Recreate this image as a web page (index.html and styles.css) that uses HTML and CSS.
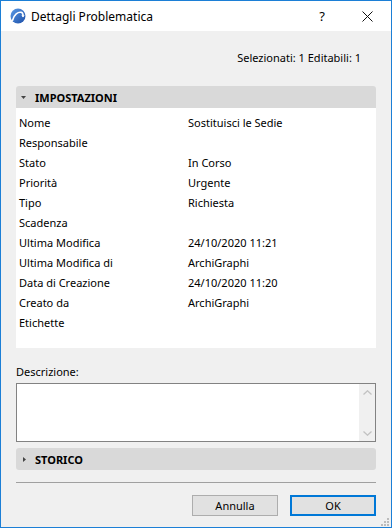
FILE: index.html
```html
<!DOCTYPE html>
<html lang="it">
<head>
<meta charset="utf-8">
<title>Dettagli Problematica</title>
<link rel="stylesheet" href="styles.css">
</head>
<body>
<div class="window">
  <div class="titlebar">
    <svg class="logo" width="16" height="16" viewBox="0 0 16 16">
      <defs>
        <linearGradient id="lg" x1="0" y1="0" x2="1" y2="1">
          <stop offset="0" stop-color="#5a9ae6"/>
          <stop offset="1" stop-color="#1d4fa8"/>
        </linearGradient>
      </defs>
      <circle cx="8" cy="8" r="7.5" fill="url(#lg)"/>
      <path d="M2.6 12.2 C4 6.5 8 3.6 11.2 4.3 C12.6 4.7 13.2 6.2 13 8.4" fill="none" stroke="#fff" stroke-width="1.6" stroke-linecap="round"/>
      <path d="M13 8.4 L12 7.2 M13 8.4 L14 7.3" fill="none" stroke="#fff" stroke-width="1" stroke-linecap="round"/>
    </svg>
    <span class="title">Dettagli Problematica</span>
    <span class="help">?</span>
    <svg class="close" width="11" height="11" viewBox="0 0 11 11">
      <path d="M0.5 0.5 L10.5 10.5 M10.5 0.5 L0.5 10.5" stroke="#111" stroke-width="1"/>
    </svg>
  </div>
  <div class="content">
    <div class="counts">Selezionati: 1 Editabili: 1</div>

    <div class="section-head open">
      <svg class="tri" width="5" height="3" viewBox="0 0 5 3"><path d="M0 0 H5 L2.5 3 Z" fill="#444"/></svg>
      <span>IMPOSTAZIONI</span>
    </div>
    <div class="props">
      <div class="row"><span class="k">Nome</span><span class="v">Sostituisci le Sedie</span></div>
      <div class="row"><span class="k">Responsabile</span><span class="v"></span></div>
      <div class="row"><span class="k">Stato</span><span class="v">In Corso</span></div>
      <div class="row"><span class="k">Priorità</span><span class="v">Urgente</span></div>
      <div class="row"><span class="k">Tipo</span><span class="v">Richiesta</span></div>
      <div class="row"><span class="k">Scadenza</span><span class="v"></span></div>
      <div class="row"><span class="k">Ultima Modifica</span><span class="v">24/10/2020 11:21</span></div>
      <div class="row"><span class="k">Ultima Modifica di</span><span class="v">ArchiGraphi</span></div>
      <div class="row"><span class="k">Data di Creazione</span><span class="v">24/10/2020 11:20</span></div>
      <div class="row"><span class="k">Creato da</span><span class="v">ArchiGraphi</span></div>
      <div class="row"><span class="k">Etichette</span><span class="v"></span></div>
    </div>

    <div class="desc-label">Descrizione:</div>
    <div class="textarea">
      <div class="text"></div>
      <div class="scroll">
        <svg width="9" height="5" viewBox="0 0 9 5"><path d="M0.5 4.5 L4.5 0.8 L8.5 4.5" fill="none" stroke="#c2c2c2" stroke-width="1.3"/></svg>
        <svg width="9" height="5" viewBox="0 0 9 5"><path d="M0.5 0.5 L4.5 4.2 L8.5 0.5" fill="none" stroke="#c2c2c2" stroke-width="1.3"/></svg>
      </div>
    </div>

    <div class="section-head closed">
      <svg class="tri" width="3" height="5" viewBox="0 0 3 5"><path d="M0 0 V5 L3 2.5 Z" fill="#444"/></svg>
      <span>STORICO</span>
    </div>

    <div class="sep"></div>

    <div class="buttons">
      <button class="btn">Annulla</button>
      <button class="btn default">OK</button>
    </div>
  </div>
  <svg class="grip" width="9" height="9" viewBox="0 0 9 9">
    <rect x="7" y="1" width="2" height="2" fill="#bcbcbc"/>
    <rect x="4" y="4" width="2" height="2" fill="#bcbcbc"/>
    <rect x="7" y="4" width="2" height="2" fill="#bcbcbc"/>
    <rect x="1" y="7" width="2" height="2" fill="#bcbcbc"/>
    <rect x="4" y="7" width="2" height="2" fill="#bcbcbc"/>
    <rect x="7" y="7" width="2" height="2" fill="#bcbcbc"/>
  </svg>
</div>
</body>
</html>
```

FILE: styles.css
```css
* { box-sizing: border-box; }
html, body { margin: 0; padding: 0; }
body {
  font-family: "Noto Sans", "Open Sans", sans-serif;
  font-size: 11px;
  color: #000;
  background: #f0f0f0;
}
.window {
  position: relative;
  width: 392px;
  height: 528px;
  border: 1px solid #1c7fd6;
  background: #f0f0f0;
  display: flex;
  flex-direction: column;
}
.titlebar {
  height: 30px;
  background: #fff;
  display: flex;
  align-items: center;
  padding-left: 9px;
}
.logo { margin-right: 5px; }
.title {
  font-size: 12px;
  color: #000;
  flex: 1;
}
.help {
  font-size: 13px;
  margin-right: 37px;
}
.close { margin-right: 18px; }

.content {
  flex: 1;
  padding: 0 15px;
  display: flex;
  flex-direction: column;
}
.counts {
  text-align: right;
  padding-right: 15px;
  margin-top: 19px;
  height: 16px;
  line-height: 16px;
}
.section-head {
  height: 22px;
  background: #d9d9d9;
  border-radius: 3px;
  display: flex;
  align-items: center;
  font-weight: bold;
  color: #000;
}
.section-head.open {
  margin-top: 20px;
  border-radius: 3px 3px 0 0;
}
.section-head.closed { margin-top: 6px; }
.section-head.open .tri { margin-left: 5px; margin-right: 9px; }
.section-head.closed .tri { margin-left: 7px; margin-right: 9px; }

.props {
  background: #fff;
  height: 240px;
  padding: 4px 0 0 3px;
}
.row {
  height: 20px;
  display: flex;
  align-items: center;
}
.row .k { width: 169px; }

.desc-label {
  margin-top: 16px;
  height: 16px;
  line-height: 16px;
}
.textarea {
  margin-top: 3px;
  height: 59px;
  border: 1px solid #828282;
  background: #fff;
  display: flex;
}
.textarea .text { flex: 1; }
.textarea .scroll {
  width: 16px;
  background: #f0f0f0;
  display: flex;
  flex-direction: column;
  justify-content: space-between;
  align-items: center;
  padding: 6px 0 5px;
}
.sep {
  margin-top: 12px;
  height: 1px;
  background: #a0a0a0;
}
.buttons {
  margin-top: 12px;
  display: flex;
  justify-content: flex-end;
  gap: 12px;
}
.btn {
  width: 86px;
  height: 21px;
  font-family: inherit;
  font-size: 11px;
  color: #000;
  background: #e1e1e1;
  border: 1px solid #adadad;
  padding: 0;
}
.btn.default {
  border: 2px solid #0078d7;
}
.grip {
  position: absolute;
  right: 2px;
  bottom: 1px;
}
```
